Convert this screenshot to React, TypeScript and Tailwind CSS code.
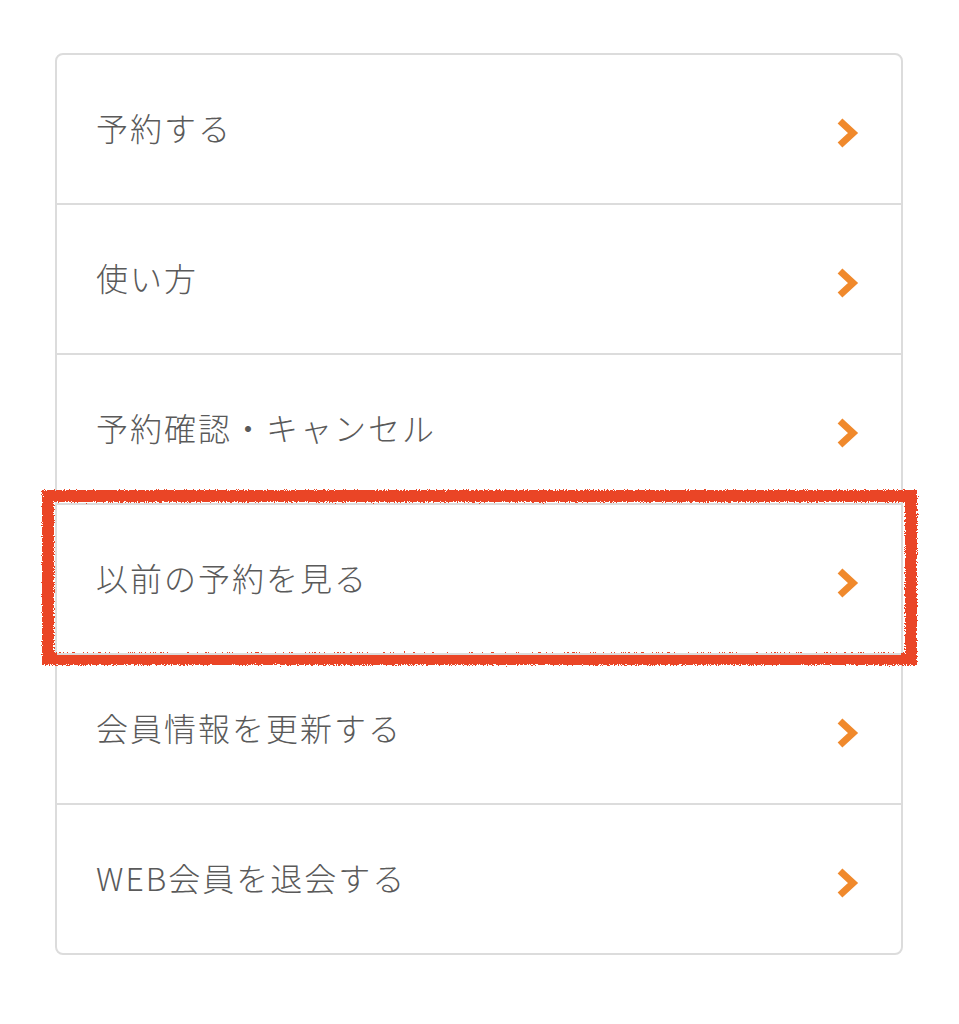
import React from "react";

const items = [
  "予約する",
  "使い方",
  "予約確認・キャンセル",
  "以前の予約を見る",
  "会員情報を更新する",
  "WEB会員を退会する",
];

const Chevron = () => (
  <svg width="24" height="32" viewBox="0 0 24 32" className="shrink-0">
    <polyline
      points="4,4 17,16 4,28"
      fill="none"
      stroke="#f0892c"
      strokeWidth="7"
      strokeLinejoin="miter"
    />
  </svg>
);

const App: React.FC = () => {
  return (
    <div className="min-h-[1024px] w-[959px] bg-white pt-[53px] pl-[55px] font-['Noto_Sans_CJK_JP','Noto_Sans',sans-serif]">
      {/* rough pencil filter for the highlight box */}
      <svg width="0" height="0" className="absolute">
        <defs>
          <filter id="rough">
            <feTurbulence type="fractalNoise" baseFrequency="0.9" numOctaves="2" result="noise" />
            <feDisplacementMap in="SourceGraphic" in2="noise" scale="5" />
          </filter>
        </defs>
      </svg>

      <div className="w-[848px] rounded-lg border-2 border-[#dcdcdc] bg-white">
        {items.map((label, i) => (
          <div
            key={label}
            className={`relative flex items-center justify-between pl-[39px] pr-[41px] ${
              i > 0 ? "h-[150px] border-t-2 border-[#dcdcdc]" : "h-[148px]"
            }`}
          >
            <span className="-mt-[4px] text-[32px] font-light leading-none tracking-[2px] text-[#5a5a5a]">{label}</span>
            <div className="mt-2">
              <Chevron />
            </div>
            {i === 3 && (
              <div className="pointer-events-none absolute -left-[15px] -right-[16px] -top-[15px] -bottom-[12px] border-[12px] border-[#ea4427] [filter:url(#rough)]" />
            )}
          </div>
        ))}
      </div>
    </div>
  );
};

export default App;
